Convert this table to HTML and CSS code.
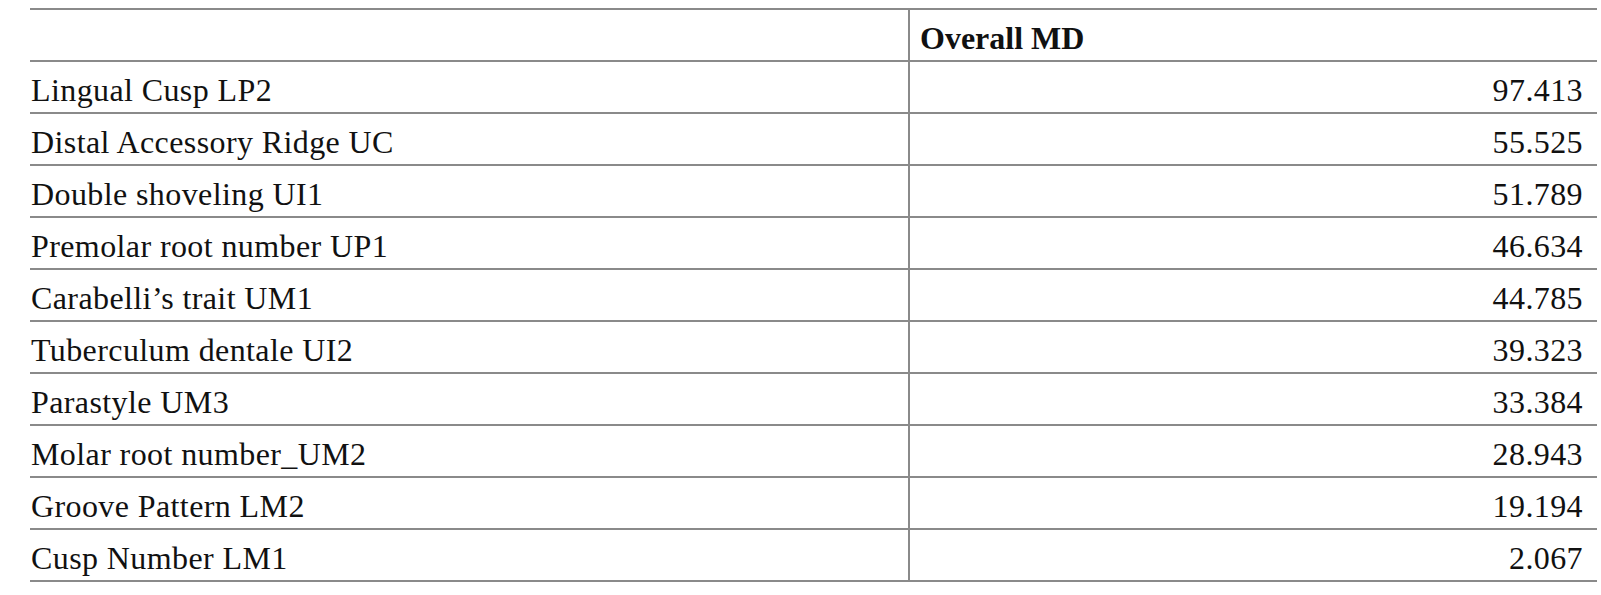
FILE: index.html
```html
<!DOCTYPE html>
<html>
<head>
<meta charset="utf-8">
<link rel="stylesheet" href="styles.css">
</head>
<body>
<table class="data">
  <thead>
    <tr><th class="label"></th><th class="value-head">Overall MD</th></tr>
  </thead>
  <tbody>
    <tr><td class="label">Lingual Cusp LP2</td><td class="value">97.413</td></tr>
    <tr><td class="label">Distal Accessory Ridge UC</td><td class="value">55.525</td></tr>
    <tr><td class="label">Double shoveling UI1</td><td class="value">51.789</td></tr>
    <tr><td class="label">Premolar root number UP1</td><td class="value">46.634</td></tr>
    <tr><td class="label">Carabelli’s trait UM1</td><td class="value">44.785</td></tr>
    <tr><td class="label">Tuberculum dentale UI2</td><td class="value">39.323</td></tr>
    <tr><td class="label">Parastyle UM3</td><td class="value">33.384</td></tr>
    <tr><td class="label">Molar root number_UM2</td><td class="value">28.943</td></tr>
    <tr><td class="label">Groove Pattern LM2</td><td class="value">19.194</td></tr>
    <tr><td class="label">Cusp Number LM1</td><td class="value">2.067</td></tr>
  </tbody>
</table>
</body>
</html>
```
FILE: styles.css
```css
html, body {
  margin: 0;
  padding: 0;
  background: #ffffff;
}
body {
  padding: 8px 0 0 30px;
}
.data {
  border-collapse: collapse;
  width: 1567px;
  font-family: "Liberation Serif", "Times New Roman", serif;
  font-size: 32px;
  letter-spacing: 0.4px;
  color: #111111;
}
.data th, .data td {
  border-top: 2px solid #8a8a8a;
  border-bottom: 2px solid #8a8a8a;
  height: 42px;
  padding: 8px 0 0 0;
  vertical-align: top;
  line-height: 40px;
  white-space: nowrap;
}
.data .label {
  width: 877px;
  text-align: left;
  padding-left: 1px;
  border-right: 2px solid #8a8a8a;
}
.data .value-head {
  text-align: left;
  font-weight: bold;
  letter-spacing: 0;
  padding-left: 10px;
}
.data .value {
  text-align: right;
  padding-right: 14px;
}
```
